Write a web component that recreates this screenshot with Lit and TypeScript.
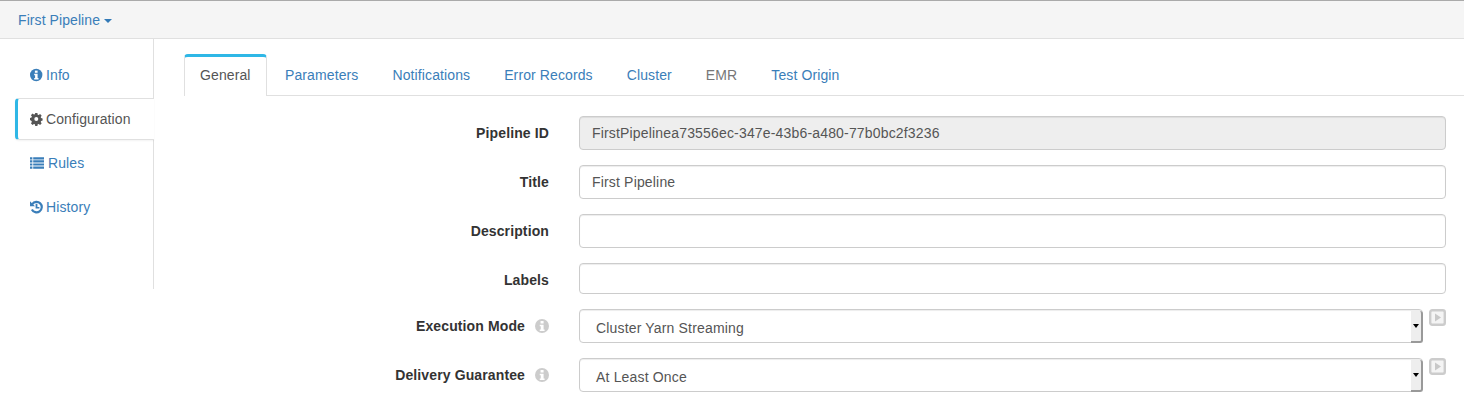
import { LitElement, css, html, svg } from 'lit';
import { customElement } from 'lit/decorators.js';

const ICONS = {
  info: svg`<circle cx="6.2" cy="7" r="6.2" fill="currentColor"/><rect x="4.9" y="2.6" width="2.7" height="2.2" fill="#fff"/><path d="M4.2 5.8h3.4v4.3h.9v1.4H4.2v-1.4h.9V7.2h-.9z" fill="#fff"/>`,
  cog: svg`<path fill="currentColor" fill-rule="evenodd" d="M5.2 1h2.2l.3 1.7 1 .4 1.4-1 1.6 1.6-1 1.4.4 1 1.5.3v2.2l-1.5.3-.4 1 1 1.4-1.6 1.6-1.4-1-1 .4-.3 1.7H5.2l-.3-1.7-1-.4-1.4 1-1.6-1.6 1-1.4-.4-1L0 8.1V5.9l1.5-.3.4-1-1-1.4 1.6-1.6 1.4 1 1-.4zM6.3 5a2 2 0 1 0 0 4 2 2 0 0 0 0-4z"/>`,
  list: svg`<path fill="currentColor" d="M0 1.2h2.4v2.2H0zM3.2 1.2H14v2.2H3.2zM0 4.3h2.4v2.2H0zM3.2 4.3H14v2.2H3.2zM0 7.4h2.4v2.2H0zM3.2 7.4H14v2.2H3.2zM0 10.5h2.4v2.2H0zM3.2 10.5H14v2.2H3.2z"/>`,
  history: svg`<path fill="none" stroke="currentColor" stroke-width="2.2" d="M2.3 4.1A5.2 5.2 0 1 1 1.9 9.4"/><path fill="currentColor" d="M0 1.2v5h5zM5.6 3.8h1.8v3.2h2v1.6H5.6z"/>`,
};

@customElement('app-root')
export class AppRoot extends LitElement {
  private icon(name: keyof typeof ICONS) {
    return html`<svg class="icon" viewBox="0 0 13 14">${ICONS[name]}</svg>`;
  }

  private field(label: string, value: string, variant = '') {
    return html`
      <div class="row">
        <label>${label}</label>
        <div class="control ${variant}">${value}</div>
      </div>
    `;
  }

  private selectField(label: string, value: string) {
    return html`
      <div class="row">
        <label>${label}<svg class="help" viewBox="0 0.8 12.4 12.4">${ICONS.info}</svg></label>
        <div class="select">
          <span class="select-value">${value}</span>
          <span class="spinner"><i></i></span>
        </div>
        <svg class="play" viewBox="0 0 17 17">
          <rect x="1.2" y="1.2" width="14.6" height="14.6" rx="2" fill="#f4f4f4" stroke="#ccc" stroke-width="2.4"/>
          <path d="M6 4.5l6 4-6 4z" fill="#c8c8c8"/>
        </svg>
      </div>
    `;
  }

  render() {
    return html`
      <header><a class="title">First Pipeline<span class="caret"></span></a></header>
      <div class="body">
        <nav class="side">
          <a class="first">${this.icon('info')}Info</a>
          <a class="active">${this.icon('cog')}Configuration</a>
          <a class="rules"><svg class="icon" viewBox="0 0 14 14">${ICONS.list}</svg>Rules</a>
          <a>${this.icon('history')}History</a>
        </nav>
        <main>
          <div class="tabs">
            <a class="active">General</a>
            <a>Parameters</a>
            <a>Notifications</a>
            <a>Error Records</a>
            <a>Cluster</a>
            <a class="muted">EMR</a>
            <a>Test Origin</a>
          </div>
          <form>
            ${this.field('Pipeline ID', 'FirstPipelinea73556ec-347e-43b6-a480-77b0bc2f3236', 'disabled')}
            ${this.field('Title', 'First Pipeline')}
            ${this.field('Description', '')}
            ${this.field('Labels', '', 'tags')}
            ${this.selectField('Execution Mode', 'Cluster Yarn Streaming')}
            ${this.selectField('Delivery Guarantee', 'At Least Once')}
          </form>
        </main>
      </div>
    `;
  }

  static styles = css`
    :host {
      display: block;
      height: 400px;
      overflow: hidden;
      background: #fff;
      font-family: 'Liberation Sans', Arial, sans-serif;
      font-size: 14px;
      line-height: 20px;
      letter-spacing: 0.17px;
      color: #555;
    }

    a {
      color: #3a7eb9;
    }

    header {
      height: 37px;
      border-top: 1px solid #aaa;
      border-bottom: 1px solid #e0e0e0;
      background: #f5f5f5;
      padding-left: 18px;
      display: flex;
      align-items: center;
    }

    .title {
      letter-spacing: 0.08px;
    }

    .caret {
      display: inline-block;
      margin-left: 4px;
      vertical-align: middle;
      border-top: 4px solid #337ab7;
      border-left: 4px solid transparent;
      border-right: 4px solid transparent;
    }

    .body {
      display: flex;
      align-items: flex-start;
    }

    .side {
      box-sizing: border-box;
      width: 154px;
      height: 250px;
      padding-top: 15px;
      border-right: 1px solid #e0e0e0;
      flex: none;
      display: flex;
      flex-direction: column;
    }

    .side a {
      box-sizing: border-box;
      height: 44px;
      margin-left: 15px;
      padding-left: 15px;
      display: flex;
      align-items: center;
      gap: 3px;
      letter-spacing: 0.1px;
    }

    .side a.first {
      height: 42px;
      margin-bottom: 2px;
    }

    .side a.rules {
      gap: 4px;
    }

    .side a.active {
      width: 139px;
      height: 42px;
      margin-bottom: 1px;
      padding-left: 12px;
      color: #555;
      background: #fff;
      border: 1px solid #e0e0e0;
      border-left: 3px solid #2fb7e6;
      border-right: none;
      border-radius: 4px 0 0 4px;
      box-shadow: 0 1px 2px rgba(0, 0, 0, 0.05);
    }

    .icon {
      width: 13px;
      height: 14px;
      flex: none;
    }

    .rules .icon {
      width: 14px;
    }

    main {
      flex: 1;
      min-width: 0;
      padding: 15px 18px 0 30px;
    }

    .tabs {
      margin-right: -18px;
      height: 41px;
      display: flex;
      border-bottom: 1px solid #e0e0e0;
      letter-spacing: 0.11px;
    }

    .tabs a {
      box-sizing: border-box;
      height: 41px;
      padding: 11px 15px 0;
      margin-right: 4px;
    }

    .tabs a.active {
      height: 42px;
      width: 83px;
      padding-top: 8px;
      margin-right: 3px;
      color: #555;
      background: #fff;
      border: 1px solid #e0e0e0;
      border-top: 3px solid #2fb7e6;
      border-bottom: none;
      border-radius: 4px 4px 0 0;
    }

    .tabs a.muted {
      color: #777;
    }

    form {
      padding-top: 20px;
      display: flex;
      flex-direction: column;
      gap: 15px;
    }

    .row {
      display: flex;
      align-items: flex-start;
      gap: 30px;
      position: relative;
    }

    label {
      width: 365px;
      flex: none;
      padding-top: 7px;
      font-weight: 700;
      letter-spacing: 0.12px;
      color: #333;
      display: flex;
      justify-content: flex-end;
      align-items: center;
    }

    .control {
      flex: 1;
      box-sizing: border-box;
      height: 34px;
      padding: 6px 12px;
      background: #fff;
      border: 1px solid #ccc;
      border-radius: 4px;
      box-shadow: inset 0 1px 1px rgba(0, 0, 0, 0.075);
    }

    .control.disabled {
      background: #eee;
    }

    .control.tags {
      height: 31px;
    }

    .help {
      width: 14px;
      height: 14px;
      margin-left: 10px;
      color: #ccc;
      flex: none;
    }

    .select {
      position: relative;
      box-sizing: border-box;
      width: 844px;
      height: 34px;
      padding: 8px 16px 0;
      background: #fff;
      border: 1px solid #ccc;
      border-radius: 4px;
      box-shadow: inset 0 1px 1px rgba(0, 0, 0, 0.075);
      flex: none;
    }

    .select-value {
      display: block;
    }

    .spinner {
      position: absolute;
      top: 1px;
      right: -1px;
      bottom: -1px;
      width: 12px;
      background: #eee;
      border-right: 2px solid #999;
      border-bottom: 2px solid #999;
      border-radius: 0 3px 3px 0;
      box-sizing: border-box;
    }

    .spinner i {
      position: absolute;
      left: 2px;
      top: 13px;
      border-top: 4px solid #000;
      border-left: 3px solid transparent;
      border-right: 3px solid transparent;
    }

    .play {
      position: absolute;
      left: 1245px;
      top: 0;
      width: 17px;
      height: 17px;
    }
  `;
}

declare global {
  interface HTMLElementTagNameMap {
    'app-root': AppRoot;
  }
}
